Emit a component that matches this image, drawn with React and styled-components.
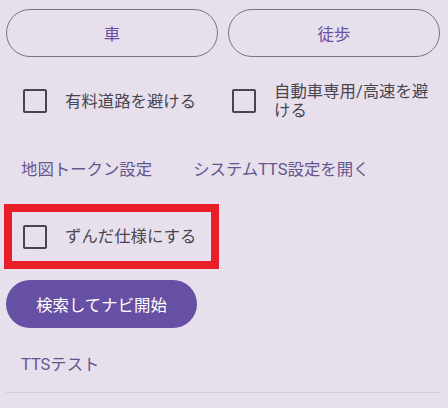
import React from "react";
import styled, { createGlobalStyle } from "styled-components";

const GlobalStyle = createGlobalStyle`
  html, body {
    margin: 0;
    padding: 0;
    background: #e7e0ec;
  }
  body {
    font-family: Roboto, "Noto Sans CJK JP", sans-serif;
    -webkit-font-smoothing: antialiased;
  }
`;

const Page = styled.div`
  width: 448px;
  height: 408px;
  box-sizing: border-box;
  padding: 9px 8px 0 6px;
  background: #e7e0ec;
  display: flex;
  flex-direction: column;
  overflow: hidden;
`;

const ModeRow = styled.div`
  display: grid;
  grid-template-columns: 1fr 1fr;
  gap: 10px;
`;

const OutlineButton = styled.button`
  height: 48px;
  border: 1.5px solid #79747e;
  border-radius: 24px;
  background: transparent;
  color: #6750a4;
  font-family: inherit;
  font-size: 16.4px;
  cursor: pointer;
`;

const OptionRow = styled.div`
  display: grid;
  grid-template-columns: 209px 1fr;
  margin-top: 20px;
  padding-left: 17px;
  min-height: 48px;
  align-items: center;
`;

const Option = styled.label`
  display: flex;
  align-items: center;
  gap: 18px;
  color: #49454f;
  font-size: 16.4px;
  line-height: 19px;
`;

const Box = styled.span`
  flex: 0 0 auto;
  width: 24px;
  height: 24px;
  box-sizing: border-box;
  border: 2.5px solid #49454f;
  border-radius: 2px;
`;

const LinkRow = styled.div`
  display: flex;
  align-items: center;
  gap: 41px;
  height: 40px;
  margin-top: 23px;
  padding-left: 15px;
`;

const TextLink = styled.button`
  border: none;
  background: none;
  padding: 0;
  color: #65558f;
  font-family: inherit;
  font-size: 16.4px;
  cursor: pointer;
`;

const RedFrame = styled.div`
  margin-top: 16px;
  margin-left: -2px;
  width: 215px;
  height: 65px;
  box-sizing: border-box;
  border: 8px solid #e81f29;
  padding-left: 11px;
  display: flex;
  align-items: center;
`;

const FilledButton = styled.button`
  margin-top: 11px;
  width: 191px;
  height: 48px;
  border: none;
  border-radius: 24px;
  background: #6650a3;
  color: #ffffff;
  font-family: inherit;
  font-size: 16.4px;
  cursor: pointer;
`;

const TestRow = styled.div`
  display: flex;
  align-items: center;
  height: 40px;
  margin-top: 15px;
  padding-left: 15px;
`;

const Divider = styled.hr`
  margin: 9px 0 0;
  border: none;
  height: 1px;
  background: #d3cbd9;
`;

const Checkbox = ({ children }) => (
  <Option>
    <Box />
    <span>{children}</span>
  </Option>
);

export default function App() {
  return (
    <>
      <GlobalStyle />
      <Page>
        <ModeRow>
          <OutlineButton>車</OutlineButton>
          <OutlineButton>徒歩</OutlineButton>
        </ModeRow>

        <OptionRow>
          <Checkbox>有料道路を避ける</Checkbox>
          <Checkbox>自動車専用/高速を避ける</Checkbox>
        </OptionRow>

        <LinkRow>
          <TextLink>地図トークン設定</TextLink>
          <TextLink>システムTTS設定を開く</TextLink>
        </LinkRow>

        <RedFrame>
          <Checkbox>ずんだ仕様にする</Checkbox>
        </RedFrame>

        <FilledButton>検索してナビ開始</FilledButton>

        <TestRow>
          <TextLink>TTSテスト</TextLink>
        </TestRow>

        <Divider />
      </Page>
    </>
  );
}
